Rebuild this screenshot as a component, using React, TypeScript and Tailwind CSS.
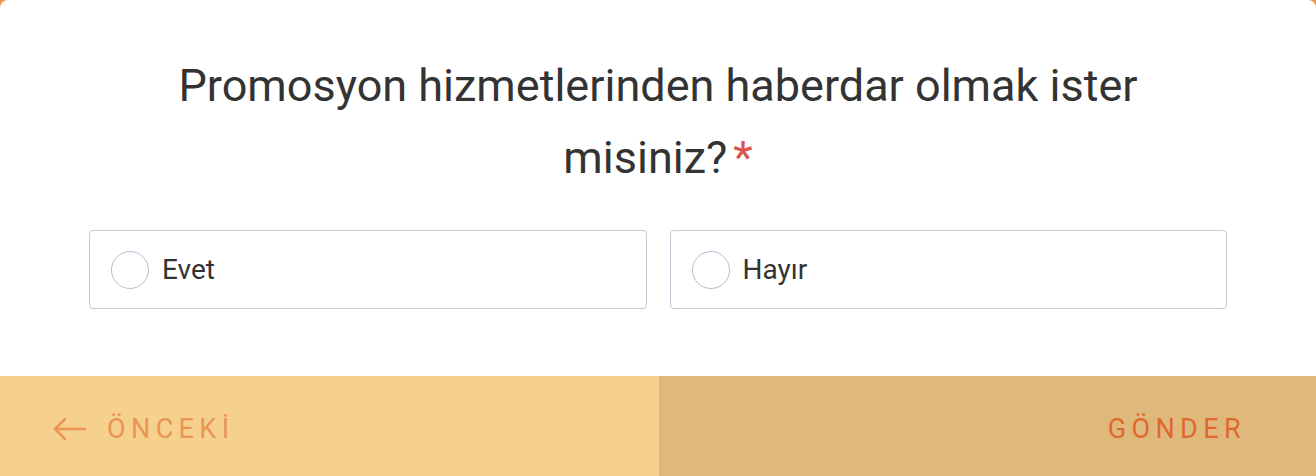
import React from "react";

function Option({ label }: { label: string }) {
  return (
    <label className="flex h-[79px] flex-1 cursor-pointer items-center rounded-[4px] border border-[#c5c9d8] bg-white pl-[21px]">
      <span className="h-[38px] w-[38px] shrink-0 rounded-full border border-[#b8bdd3] bg-white" />
      <span className="ml-[13px] text-[28px] text-[#333333]">{label}</span>
    </label>
  );
}

export default function App() {
  return (
    <div
      className="h-[476px] w-[1316px] overflow-hidden bg-[#e8954f]"
      style={{ fontFamily: "Roboto, 'Noto Sans', sans-serif" }}
    >
      <div className="flex h-full flex-col overflow-hidden rounded-t-[8px] bg-white">
        <div className="flex flex-1 flex-col px-[89px] pt-[50px]">
          <h1 className="mx-auto max-w-[1040px] text-center text-[45px] font-normal leading-[72px] text-[#333333]">
            Promosyon hizmetlerinden haberdar olmak ister misiniz?
            <span className="ml-[6px] text-[#d9534f]">*</span>
          </h1>
          <div className="mt-[36px] flex gap-[23px]">
            <Option label="Evet" />
            <Option label="Hayır" />
          </div>
        </div>
        <div className="flex h-[100px] shrink-0">
          <button className="flex w-[659px] items-center bg-[#f6d08d] pl-[53px] pt-[6px] text-[27px] tracking-[0.2em] text-[#ea9553]">
            <svg width="34" height="24" viewBox="0 0 34 24" fill="none" stroke="#ea9553" strokeWidth="2.5" strokeLinecap="round" strokeLinejoin="round">
              <path d="M2 12 H32 M12 2 L2 12 L12 22" />
            </svg>
            <span className="ml-[20px]">ÖNCEKİ</span>
          </button>
          <button className="flex flex-1 items-center justify-end bg-[#dfb97c] pr-[70px] pt-[6px] text-[27px] tracking-[0.2em] text-[#e0682f]">
            GÖNDER
          </button>
        </div>
      </div>
    </div>
  );
}
